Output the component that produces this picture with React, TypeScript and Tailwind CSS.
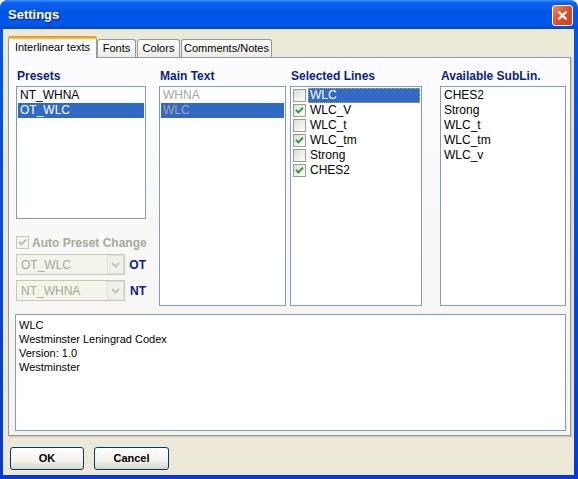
import React from "react";

const presets = ["NT_WHNA", "OT_WLC"];
const mainText = ["WHNA", "WLC"];
const selectedLines = [
  { name: "WLC", on: false },
  { name: "WLC_V", on: true },
  { name: "WLC_t", on: false },
  { name: "WLC_tm", on: true },
  { name: "Strong", on: false },
  { name: "CHES2", on: true },
];
const available = ["CHES2", "Strong", "WLC_t", "WLC_tm", "WLC_v"];
const notes = ["WLC", "Westminster Leningrad Codex", "Version: 1.0", "Westminster"];

function Check({ checked, disabled }: { checked?: boolean; disabled?: boolean }) {
  return (
    <span
      className={`w-[13px] h-[13px] shrink-0 border flex items-center justify-center ${
        disabled
          ? "border-[#CAC8BB] bg-[#F5F4EA]"
          : "border-[#9C9C96] bg-[linear-gradient(135deg,#DCDCD7,#FFFFFF)]"
      }`}
    >
      {checked && (
        <svg width="9" height="9" viewBox="0 0 9 9">
          <path
            d="M1 3.8 L3.4 6.3 L8 1.6"
            fill="none"
            stroke={disabled ? "#BDBBAE" : "#21A121"}
            strokeWidth="1.9"
          />
        </svg>
      )}
    </span>
  );
}

function Combo({ value }: { value: string }) {
  return (
    <div className="w-[111px] h-[21px] border border-[#C9C7BA] bg-[#F5F4EA] flex items-center">
      <span className="flex-1 pl-[4px] text-[12px] text-[#ACA899] leading-none">{value}</span>
      <span className="w-[17px] h-[19px] border border-[#E2E1D9] bg-[#F1F0E9] flex items-center justify-center">
        <svg width="9" height="6" viewBox="0 0 9 6">
          <path d="M1 1 L4.5 4.5 L8 1" fill="none" stroke="#C4C2B6" strokeWidth="2" />
        </svg>
      </span>
    </div>
  );
}

function Label({ children }: { children: React.ReactNode }) {
  return (
    <div className="h-[17px] pl-[1px] text-[12px] font-bold leading-[15px] text-[#0A1F7F] whitespace-nowrap">
      {children}
    </div>
  );
}

function Tab({ label, w, active }: { label: string; w: string; active?: boolean }) {
  if (active) {
    return (
      <div
        className={`${w} h-[22px] -mb-[1px] z-10 relative rounded-t-[3px] border-x border-[#919B9C] bg-[#FCFCFE] flex flex-col`}
      >
        <div className="h-[3px] rounded-t-[3px] bg-[linear-gradient(180deg,#E68B2C,#FFC73C)] -mx-[1px]" />
        <div className="flex-1 flex items-center justify-center text-[11px] text-black leading-none pb-[3px] whitespace-nowrap">
          {label}
        </div>
      </div>
    );
  }
  return (
    <div
      className={`${w} h-[18px] rounded-t-[3px] border-x border-t border-[#919B9C] bg-[linear-gradient(180deg,#FFFFFF,#ECEBE6)] flex items-center justify-center text-[11px] text-black leading-none whitespace-nowrap`}
    >
      {label}
    </div>
  );
}

export default function App() {
  return (
    <div className="w-[578px] h-[479px] rounded-t-[8px] bg-[linear-gradient(180deg,#0058EE,#0839D6)] flex flex-col overflow-hidden font-['Liberation_Sans',Arial,sans-serif]">
      {/* title bar */}
      <div className="h-[29px] shrink-0 rounded-t-[8px] bg-[linear-gradient(180deg,#3C8FF8_0%,#0A60EE_10%,#0055E5_45%,#0058EC_80%,#0049D8_100%)] flex items-center justify-between pl-[8px] pr-[5px]">
        <span className="text-[13px] font-bold text-white [text-shadow:1px_1px_0_#0A1E7A]">Settings</span>
        <span className="w-[21px] h-[21px] mt-[2px] rounded-[3px] border border-white bg-[linear-gradient(135deg,#F08B6A,#E0512C_45%,#C8401C)] flex items-center justify-center">
          <svg width="11" height="11" viewBox="0 0 11 11">
            <path d="M1.5 1.5 L9.5 9.5 M9.5 1.5 L1.5 9.5" stroke="white" strokeWidth="2.2" />
          </svg>
        </span>
      </div>

      {/* client area */}
      <div className="flex-1 ml-[3px] mr-[4px] mb-[4px] bg-[#ECE9D8] flex flex-col">
        <div className="flex items-end pl-[5px] pt-[7px]">
          <Tab label="Interlinear texts" w="w-[89px]" active />
          <Tab label="Fonts" w="w-[39px]" />
          <div className="w-[1px]" />
          <Tab label="Colors" w="w-[43px]" />
          <div className="w-[1px]" />
          <Tab label="Comments/Notes" w="w-[91px]" />
        </div>

        <div className="ml-[5px] w-[563px] h-[379px] border border-[#919B9C] bg-[linear-gradient(180deg,#FCFCFE,#F4F3EE)] shadow-[1px_1px_0_#D0CDBE,2px_2px_0_#E2DFCF] pl-[7px] pt-[11px] flex flex-col">
          <div className="flex items-start">
            {/* presets column */}
            <div className="w-[130px] flex flex-col">
              <Label>Presets</Label>
              <div className="h-[133px] border border-[#7F9DB9] bg-white pt-[1px] px-[1px]">
                {presets.map((p, i) => (
                  <div
                    key={p}
                    className={`h-[15px] pl-[2px] text-[12px] leading-[15px] ${
                      i === 1 ? "bg-[#316AC5] text-white" : "text-black"
                    }`}
                  >
                    {p}
                  </div>
                ))}
              </div>
              <div className="mt-[17px] h-[13px] flex items-center gap-[3px] whitespace-nowrap">
                <Check checked disabled />
                <span className="text-[12px] font-bold text-[#ACA899] leading-none">Auto Preset Change</span>
              </div>
              <div className="mt-[5px] flex items-center gap-[4px]">
                <Combo value="OT_WLC" />
                <span className="text-[12px] font-bold text-[#0A1F7F]">OT</span>
              </div>
              <div className="mt-[5px] flex items-center gap-[5px]">
                <Combo value="NT_WHNA" />
                <span className="text-[12px] font-bold text-[#0A1F7F]">NT</span>
              </div>
            </div>

            {/* main text */}
            <div className="w-[127px] ml-[13px] flex flex-col">
              <Label>Main Text</Label>
              <div className="h-[220px] border border-[#7F9DB9] bg-white pt-[1px] px-[1px]">
                {mainText.map((m, i) => (
                  <div
                    key={m}
                    className={`h-[15px] pl-[2px] text-[12px] leading-[15px] text-[#A7A6A0] ${
                      i === 1 ? "bg-[#316AC5]" : ""
                    }`}
                  >
                    {m}
                  </div>
                ))}
              </div>
            </div>

            {/* selected lines */}
            <div className="w-[132px] ml-[4px] flex flex-col">
              <Label>Selected Lines</Label>
              <div className="h-[220px] border border-[#7F9DB9] bg-white pt-[1px] pl-[2px] pr-[1px]">
                {selectedLines.map((s, i) => (
                  <div key={s.name} className="h-[15px] flex items-center">
                    <Check checked={s.on} />
                    <span
                      className={`ml-[2px] flex-1 h-[15px] pl-[1px] text-[12px] leading-[13px] border ${
                        i === 0
                          ? "bg-[#316AC5] text-white border-dotted border-[#C9B15A]"
                          : "text-black border-transparent"
                      }`}
                    >
                      {s.name}
                    </span>
                  </div>
                ))}
              </div>
            </div>

            {/* available sublin */}
            <div className="w-[126px] ml-[18px] flex flex-col">
              <Label>Available SubLin.</Label>
              <div className="h-[220px] border border-[#7F9DB9] bg-white pt-[1px] pl-[3px]">
                {available.map((a) => (
                  <div key={a} className="h-[15px] text-[12px] leading-[15px] text-black">
                    {a}
                  </div>
                ))}
              </div>
            </div>
          </div>

          {/* notes */}
          <div className="mt-[8px] -ml-[1px] w-[551px] h-[117px] border border-[#7F9DB9] bg-white pt-[3px] pl-[3px]">
            {notes.map((n) => (
              <div key={n} className="text-[11px] leading-[14px] text-black">
                {n}
              </div>
            ))}
          </div>
        </div>

        {/* buttons */}
        <div className="mt-[11px] ml-[7px] flex gap-[10px]">
          <button className="w-[74px] h-[23px] rounded-[3px] border border-[#003C74] bg-[linear-gradient(180deg,#FFFFFF,#F3F2EC_60%,#D8D3C7)] text-[11px] font-bold text-black">
            OK
          </button>
          <button className="w-[75px] h-[23px] rounded-[3px] border border-[#003C74] bg-[linear-gradient(180deg,#FFFFFF,#F3F2EC_60%,#D8D3C7)] text-[11px] font-bold text-black">
            Cancel
          </button>
        </div>
      </div>
    </div>
  );
}
